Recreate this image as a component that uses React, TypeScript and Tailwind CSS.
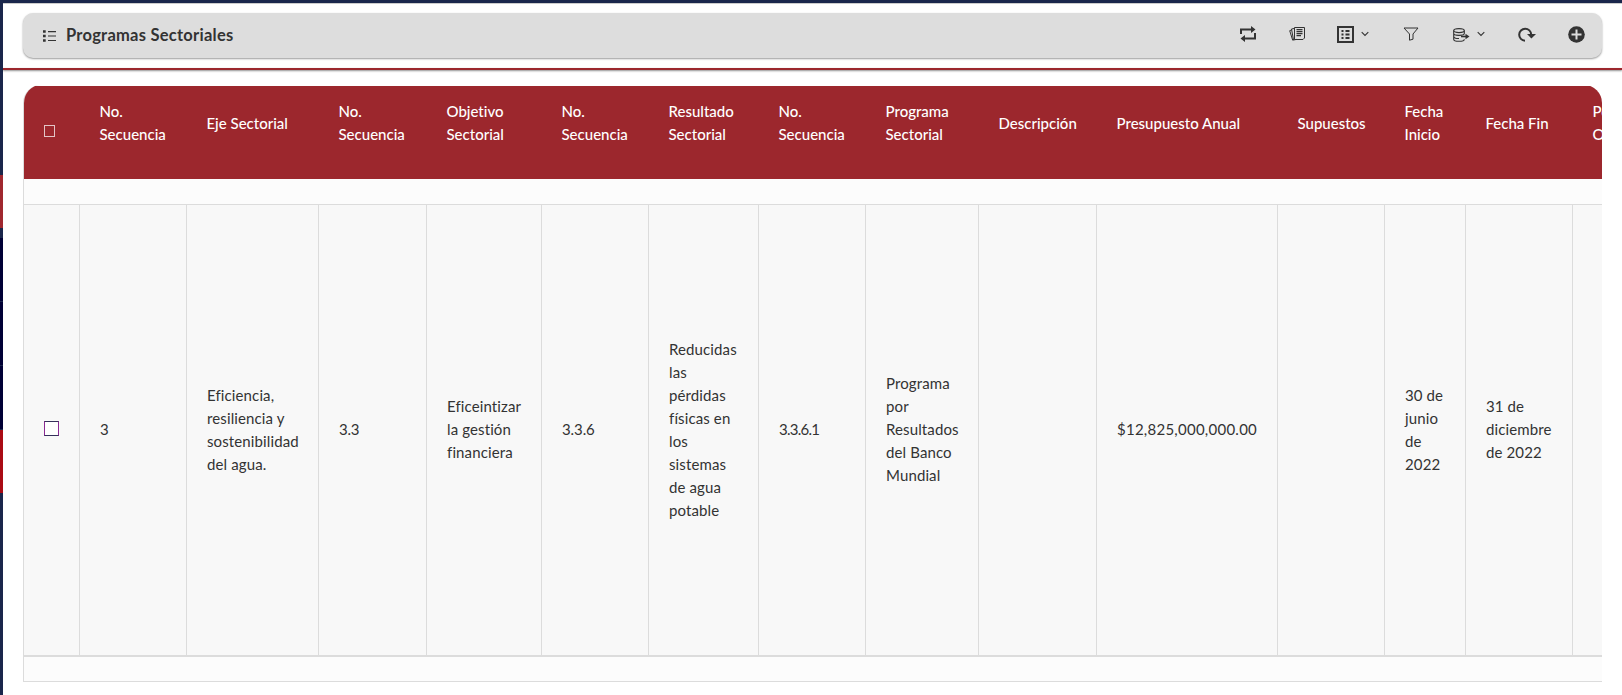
import React from "react";

type Column = { header: string[]; cell: string[]; width: string; spacing?: string };

const columns: Column[] = [
  { header: ["No.", "Secuencia"], cell: ["3"], width: "w-[107px]" },
  { header: ["Eje Sectorial"], cell: ["Eficiencia,", "resiliencia y", "sostenibilidad", "del agua."], width: "w-[132px]" },
  { header: ["No.", "Secuencia"], cell: ["3.3"], width: "w-[108px]", spacing: "tracking-[-0.2px]" },
  { header: ["Objetivo", "Sectorial"], cell: ["Eficeintizar", "la gestión", "financiera"], width: "w-[115px]" },
  { header: ["No.", "Secuencia"], cell: ["3.3.6"], width: "w-[107px]", spacing: "tracking-[-0.1px]" },
  { header: ["Resultado", "Sectorial"], cell: ["Reducidas", "las", "pérdidas", "físicas en", "los", "sistemas", "de agua", "potable"], width: "w-[110px]" },
  { header: ["No.", "Secuencia"], cell: ["3.3.6.1"], width: "w-[107px]", spacing: "tracking-[-0.75px]" },
  { header: ["Programa", "Sectorial"], cell: ["Programa", "por", "Resultados", "del Banco", "Mundial"], width: "w-[113px]" },
  { header: ["Descripción"], cell: [], width: "w-[118px]" },
  { header: ["Presupuesto Anual"], cell: ["$12,825,000,000.00"], width: "w-[181px]", spacing: "tracking-[0.25px]" },
  { header: ["Supuestos"], cell: [], width: "w-[107px]" },
  { header: ["Fecha", "Inicio"], cell: ["30 de", "junio", "de", "2022"], width: "w-[81px]" },
  { header: ["Fecha Fin"], cell: ["31 de", "diciembre", "de 2022"], width: "w-[107px]" },
  { header: ["Población", "Objetivo"], cell: [], width: "w-[130px]" },
];

const Lines = ({ items }: { items: string[] }) => (
  <>
    {items.map((t) => (
      <span key={t} className="block whitespace-nowrap">{t}</span>
    ))}
  </>
);

const Chevron = () => (
  <svg className="h-2 w-2" viewBox="0 0 8 8" fill="none" stroke="#333" strokeWidth="1.1">
    <path d="M.7 2.2 4 5.4 7.3 2.2" />
  </svg>
);

function Toolbar() {
  return (
    <header className="ml-[23px] mr-5 mt-[10px] flex h-[45px] shrink-0 items-center rounded-[10px] bg-[#dddddd] shadow-[0_1px_2px_rgba(0,0,0,0.4)]">
      <svg className="ml-5 h-3 w-[13px]" viewBox="0 0 13 12" fill="#333">
        <path d="M0 .3h2.700v2.400H0zM0 4.800h2.700v2.400H0zM0 9.300h2.700v2.400H0zM5 1h8v1.200H5zM5 5.400h8v1.200H5zM5 9.900h8v1.200H5z" />
      </svg>
      <h1 className="ml-[10px] flex-1 pb-px text-[16.5px] font-bold leading-6 tracking-[0.25px] text-[#333]">Programas Sectoriales</h1>
      <div className="flex h-full items-center pb-[3px] pr-[17px]">
        <svg className="h-4 w-[18px]" viewBox="0 0 18 16" fill="#333">
          <path d="M1 8V2.500h11V0l4.500 3.500L12 7V4.500H3V8zM17 7v6.500H6V16l-4.500-3.500L6 9v2.500h9V7z" />
        </svg>
        <svg className="ml-8 h-4 w-4" viewBox="0 0 16 16" fill="none" stroke="#333" strokeWidth="1">
          <path d="M5.500 1.500h10v10.500l-1.500 1.500H5.500zM5 2.500 2.500 3l2 11 3-.6M2.500 4 .7 4.700l3 9.500 1-.4" />
          <path d="M7.500 3.700h6M7.500 5.700h6M7.500 7.700h6M7.500 9.700h4.500" strokeWidth="1.300" />
        </svg>
        <svg className="ml-[32px] h-[17px] w-[17px]" viewBox="0 0 17 17" fill="none" stroke="#333">
          <path d="M1 1h15v15H1z" strokeWidth="2" />
          <path d="M4.500 5h2M4.500 8.500h2M4.500 12h2M8.500 5h4M8.500 8.500h4M8.500 12h4" strokeWidth="1.800" />
        </svg>
        <span className="ml-[7px] flex"><Chevron /></span>
        <svg className="ml-[34px] h-[14px] w-4" viewBox="0 0 16 14" fill="none" stroke="#333" strokeWidth="1">
          <path d="M1 1h14L10 7v5.200l-3.500 1V7z" />
        </svg>
        <svg className="ml-[34px] mt-[2px] h-[14px] w-[17px]" viewBox="0 0 17 14" fill="none" stroke="#333" strokeWidth="1.100">
          <ellipse cx="6" cy="2.600" rx="5.300" ry="2" />
          <path d="M.7 2.600v8.600c0 2.800 10.600 2.800 10.600 0M.7 5.600c0 2.300 10.600 2.300 10.600 0V2.600M.7 8.600c0 1.600 3 2 5.300 1.900" />
          <path d="M8 8.500h5" strokeWidth="1.600" />
          <path d="M12.500 5.700v5.600l4-2.800z" fill="#333" stroke="none" />
        </svg>
        <span className="ml-[7px] flex"><Chevron /></span>
        <svg className="ml-[33px] h-[15px] w-[18px]" viewBox="0 0 18 15" fill="none" stroke="#333" strokeWidth="2">
          <path d="M7 13.700A6 6 0 1 1 13.200 7.500" />
          <path d="M9 7h9l-4.600 4.500z" fill="#333" stroke="none" />
        </svg>
        <svg className="ml-[32px] h-[17px] w-[17px]" viewBox="0 0 17 17">
          <circle cx="8.500" cy="8.500" r="8.300" fill="#333" />
          <path d="M8.500 3.500v10M3.500 8.500h10" stroke="#ddd" strokeWidth="2" />
        </svg>
      </div>
    </header>
  );
}

function ProgramTable() {
  return (
    <section className="ml-[23px] mt-[15px] w-[1579px] shrink-0 overflow-hidden rounded-tl-[18px] rounded-tr-[18px] border-l border-[#dcdcdc] text-[15px] leading-[23px]">
      <div className="mt-px flex h-[93px] w-[1700px] bg-[#9c272d] pb-[19px] font-medium text-white">
        <div className="flex w-[55px] shrink-0 items-center pl-5 pt-4">
          <span className="h-3 w-[11px] border border-[#e3c4c6]" />
        </div>
        {columns.map((c, i) => (
          <div key={i} className={`flex shrink-0 flex-col justify-center pl-[20.5px] ${c.width}`}>
            <Lines items={c.header} />
          </div>
        ))}
      </div>
      <div className="h-[25px] bg-[#fcfcfc]" />
      <div className="flex h-[453px] w-[1700px] border-b-2 border-t border-[#dcdcdc] bg-[#f8f8f8] text-[#333]">
        <div className="flex w-[55px] shrink-0 items-center pl-5 pb-[3px]">
          <span className="h-[15px] w-[15px] border border-x-[#8b2a94] border-y-[#34305a] bg-white" />
        </div>
        {columns.map((c, i) => (
          <div
            key={i}
            className={`flex shrink-0 flex-col justify-center border-l border-[#dcdcdc] pb-px pl-5 ${c.width} ${c.spacing ?? "tracking-[0.12px]"}`}
          >
            <Lines items={c.cell} />
          </div>
        ))}
      </div>
      <div className="h-[25px] border-b border-[#dcdcdc] bg-[#fcfcfc]" />
    </section>
  );
}

export default function App() {
  return (
    <div className="flex h-[695px] w-[1622px] flex-col overflow-hidden bg-white font-['Lato',sans-serif] [font-variant-ligatures:none]">
      <div className="h-[3px] shrink-0 bg-[#1a264b]" />
      <div className="flex min-h-0 flex-1">
        <aside className="flex w-[3px] shrink-0 flex-col bg-[#1a264b]">
          <div className="mt-[172px] h-[53px] bg-[#a0272f]" />
          <div className="mt-[10px] h-[63px] bg-[#000035]" />
          <div className="mt-px h-[63px] bg-[#000035]" />
          <div className="mt-px h-[63px] bg-[#000035]" />
          <div className="mt-px h-[63px] bg-[#aa0a14]" />
        </aside>
        <main className="-ml-[3px] flex min-w-0 flex-1 flex-col">
          <div className="ml-[3px] h-px shrink-0 bg-[#cccccc]" />
          <div className="-mt-px"><Toolbar /></div>
          <div className="ml-[3px] mt-[10px] h-[2px] shrink-0 bg-[#9c272d] shadow-[0_1px_2px_rgba(0,0,0,0.45)]" />
          <ProgramTable />
        </main>
      </div>
    </div>
  );
}
